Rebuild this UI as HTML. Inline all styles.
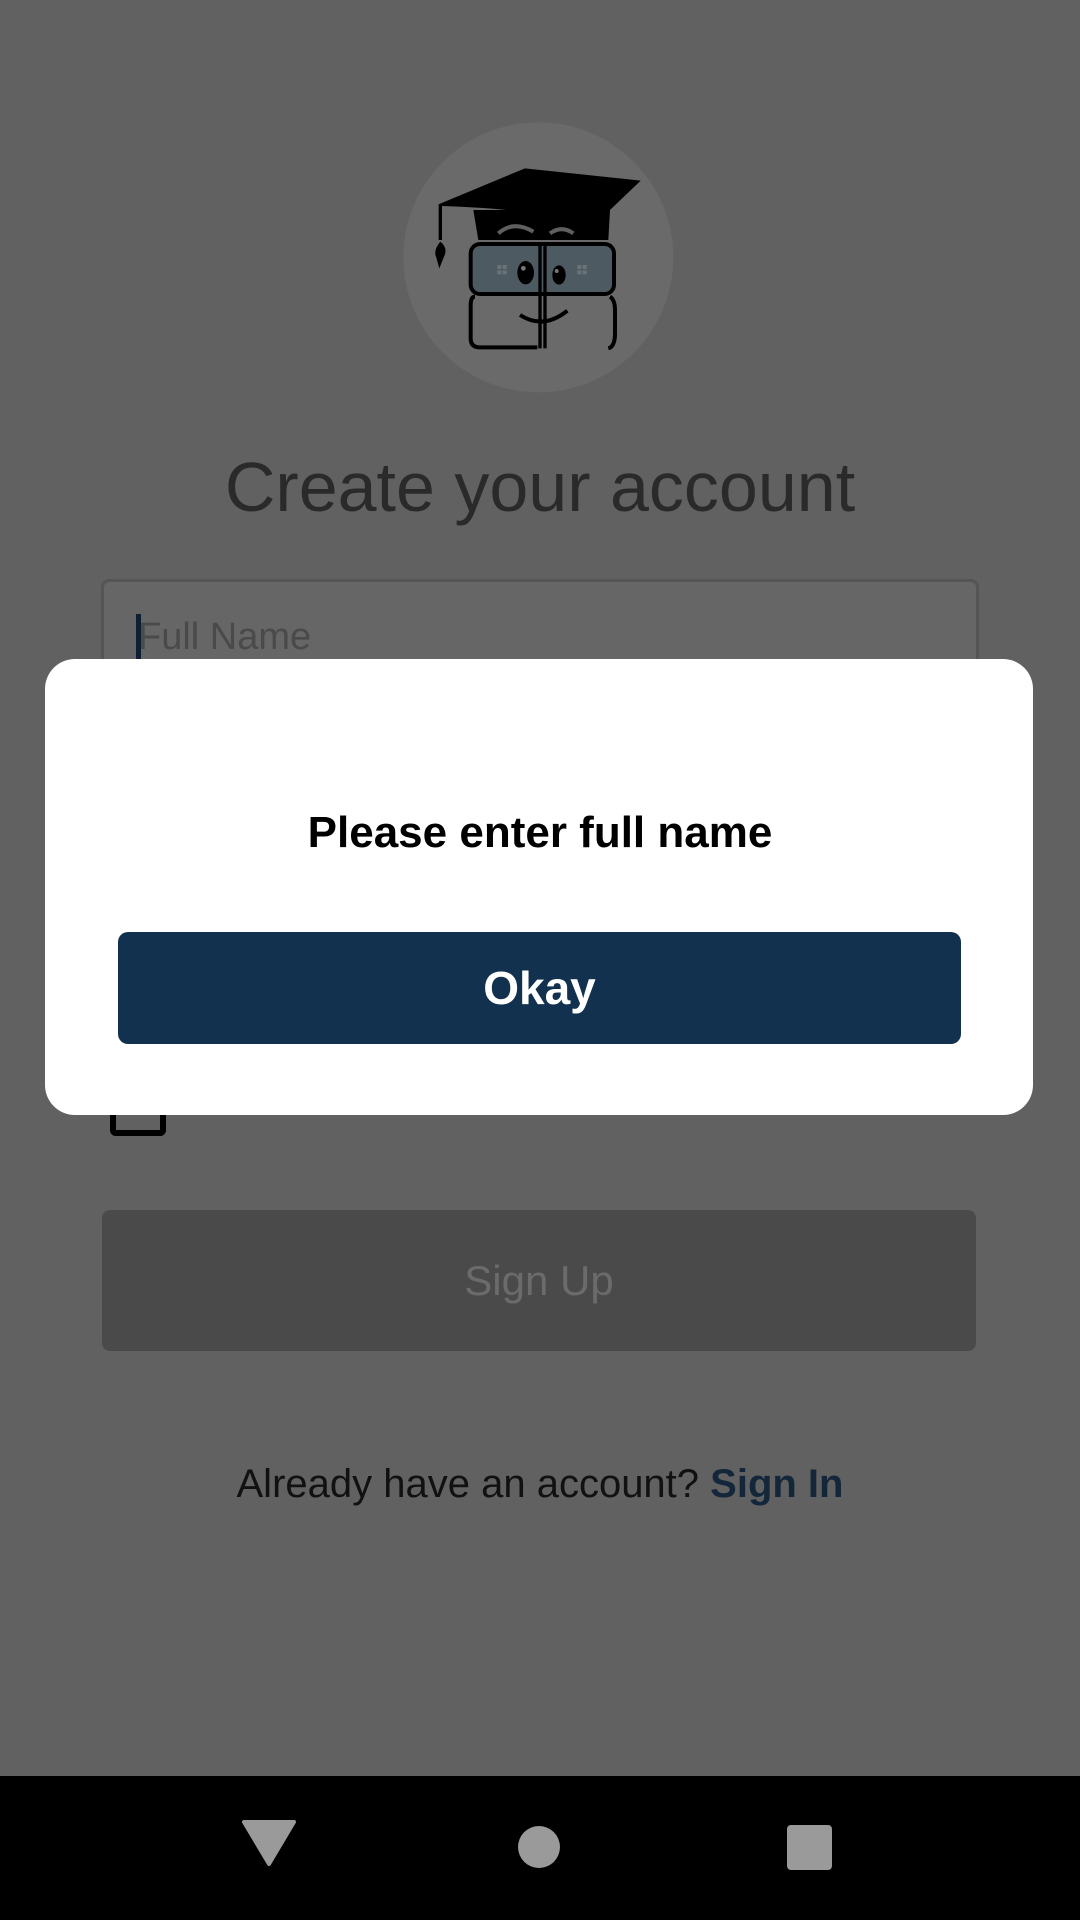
<!DOCTYPE html>
<html><head><meta charset="utf-8"><style>
body{margin:0;width:1080px;height:1920px;background:#616161;font-family:"Liberation Sans",sans-serif;position:relative;overflow:hidden}
.abs{position:absolute}
</style></head><body>
<svg class="abs" style="left:380px;top:100px" width="320" height="320" viewBox="0 0 960 960">
<circle cx="475" cy="472" r="405" fill="#6a6a6a"/>
<path d="M280 330 L690 330 L685 420 L295 420 Z" fill="#000"/>
<path d="M178 312 L435 205 L782 242 L625 392 L560 360 Q430 325 178 318 Z" fill="#000"/>
<path d="M355 400 Q400 360 460 395" stroke="#5f5f5f" stroke-width="12" fill="none"/>
<path d="M510 400 Q545 375 580 400" stroke="#5f5f5f" stroke-width="12" fill="none"/>
<path d="M181 312 L181 420" stroke="#000" stroke-width="10"/>
<path d="M181 425 Q160 450 168 470 L178 505 L192 470 Q205 445 181 425 Z" fill="#000"/>
<rect x="272" y="432" width="430" height="150" rx="28" fill="#4e5a62" stroke="#000" stroke-width="12"/>
<path d="M285 590 Q272 590 272 615 L272 715 Q272 742 300 742 L472 742" stroke="#000" stroke-width="12" fill="none"/>
<path d="M690 590 Q705 600 705 630 L705 700 Q705 740 685 745" stroke="#000" stroke-width="12" fill="none"/>
<path d="M480 430 L480 745 M495 430 L495 745" stroke="#000" stroke-width="10"/>
<ellipse cx="437" cy="518" rx="25" ry="35" fill="#000"/>
<ellipse cx="537" cy="525" rx="20" ry="29" fill="#000"/>
<circle cx="430" cy="505" r="7" fill="#777"/><circle cx="530" cy="513" r="6" fill="#777"/>
<g fill="#6b7378"><rect x="352" y="495" width="12" height="12"/><rect x="368" y="495" width="12" height="12"/><rect x="352" y="511" width="12" height="12"/><rect x="368" y="511" width="12" height="12"/><rect x="592" y="495" width="12" height="12"/><rect x="608" y="495" width="12" height="12"/><rect x="592" y="511" width="12" height="12"/><rect x="608" y="511" width="12" height="12"/></g>
<path d="M420 645 Q490 690 562 632" stroke="#000" stroke-width="12" fill="none"/>
</svg>
<div class="abs" style="left:0;width:1080px;top:447px;text-align:center;font-size:70px;color:#2a2a2a">Create your account</div>
<div class="abs" style="left:101px;top:579px;width:872px;height:200px;border:3px solid #555;border-radius:8px;background:#666"></div>
<div class="abs" style="left:136px;top:614px;width:5px;height:50px;background:#0e1f33"></div>
<div class="abs" style="left:138px;top:616px;font-size:38px;color:#4a4a4a">Full Name</div>
<div class="abs" style="left:110px;top:1090px;width:44px;height:40px;border:6px solid #000;border-top:none;border-radius:0 0 6px 6px"></div>
<div class="abs" style="left:205px;top:1080px;font-size:30px;color:#111;white-space:nowrap">I agree to the <span style="text-decoration:underline;color:#13263a">Edunet Terms &amp; Conditions</span> and <span style="text-decoration:underline;color:#13263a">Privacy Policy</span></div>
<div class="abs" style="left:102px;top:1210px;width:874px;height:141px;background:#4a4a4a;border-radius:8px;text-align:center;line-height:141px;font-size:42px;color:#6b6b6b">Sign Up</div>
<div class="abs" style="left:0;width:1080px;top:1462px;text-align:center;font-size:40px;color:#111">Already have an account? <b style="color:#13263a">Sign In</b></div>
<div class="abs" style="left:45px;top:659px;width:988px;height:456px;background:#fff;border-radius:30px"></div>
<div class="abs" style="left:0;width:1080px;top:808px;text-align:center;font-size:44px;font-weight:bold;color:#000">Please enter full name</div>
<div class="abs" style="left:118px;top:932px;width:843px;height:112px;background:#12314f;border-radius:10px;text-align:center;line-height:112px;font-size:46px;font-weight:bold;color:#fff">Okay</div>
<div class="abs" style="left:0;top:1776px;width:1080px;height:144px;background:#000"></div>
<svg class="abs" style="left:0;top:1776px" width="1080" height="144">
<path d="M244 46 L294 46 L269 88 Z" fill="#9a9a9a" stroke="#9a9a9a" stroke-width="4" stroke-linejoin="round"/>
<circle cx="539" cy="71" r="21" fill="#9a9a9a"/>
<rect x="787" y="49" width="45" height="45" rx="4" fill="#9a9a9a"/>
</svg>
</body></html>
